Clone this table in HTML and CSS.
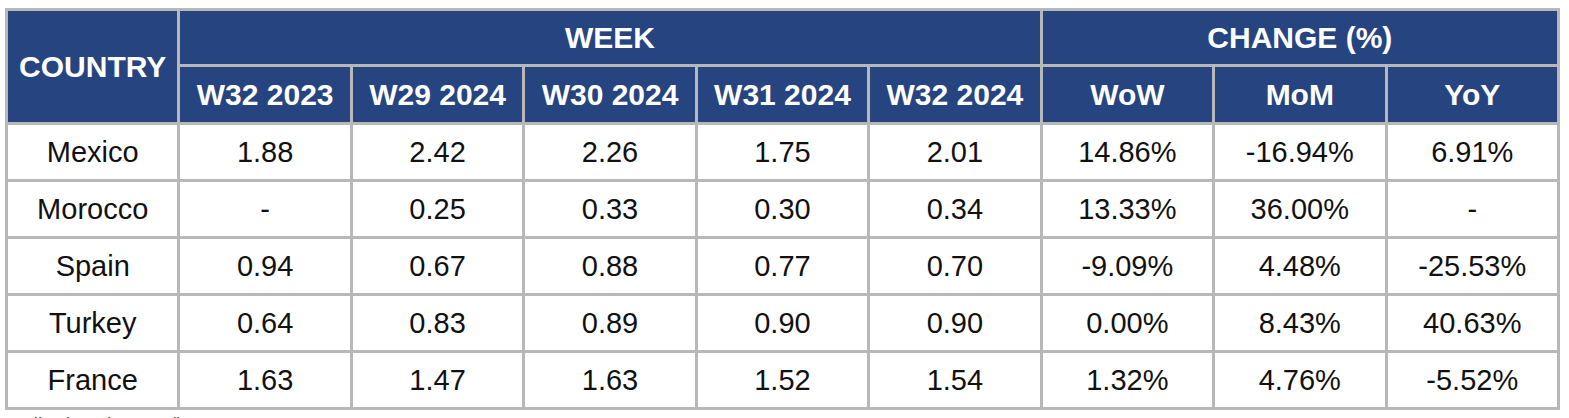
FILE: index.html
```html
<!DOCTYPE html>
<html lang="en">
<head>
<meta charset="utf-8">
<title>Weekly prices</title>
<link rel="stylesheet" href="styles.css">
</head>
<body>
<div class="page">
  <table class="prices">
    <thead>
      <tr class="group-row">
        <th rowspan="2" class="country-head">COUNTRY</th>
        <th colspan="5">WEEK</th>
        <th colspan="3">CHANGE (%)</th>
      </tr>
      <tr class="sub-row">
        <th>W32 2023</th>
        <th>W29 2024</th>
        <th>W30 2024</th>
        <th>W31 2024</th>
        <th>W32 2024</th>
        <th>WoW</th>
        <th>MoM</th>
        <th>YoY</th>
      </tr>
    </thead>
    <tbody>
      <tr><td>Mexico</td><td>1.88</td><td>2.42</td><td>2.26</td><td>1.75</td><td>2.01</td><td>14.86%</td><td>-16.94%</td><td>6.91%</td></tr>
      <tr><td>Morocco</td><td>-</td><td>0.25</td><td>0.33</td><td>0.30</td><td>0.34</td><td>13.33%</td><td>36.00%</td><td>-</td></tr>
      <tr><td>Spain</td><td>0.94</td><td>0.67</td><td>0.88</td><td>0.77</td><td>0.70</td><td>-9.09%</td><td>4.48%</td><td>-25.53%</td></tr>
      <tr><td>Turkey</td><td>0.64</td><td>0.83</td><td>0.89</td><td>0.90</td><td>0.90</td><td>0.00%</td><td>8.43%</td><td>40.63%</td></tr>
      <tr><td>France</td><td>1.63</td><td>1.47</td><td>1.63</td><td>1.52</td><td>1.54</td><td>1.32%</td><td>4.76%</td><td>-5.52%</td></tr>
    </tbody>
  </table>
  <p class="note">* All prices in USD/kg</p>
</div>
</body>
</html>
```

FILE: styles.css
```css
html, body {
  margin: 0;
  padding: 0;
  background: #ffffff;
}

.page {
  padding: 8px 0 0 5px;
  font-family: "Liberation Sans", Arial, sans-serif;
}

.prices {
  width: 1555px;
  table-layout: fixed;
  border-collapse: separate;
  border-spacing: 0;
  border-top: 3px solid #b8b8b8;
  border-left: 3px solid #b8b8b8;
}

.prices th,
.prices td {
  padding: 0;
  text-align: center;
  vertical-align: middle;
  border-right: 3px solid #b8b8b8;
  border-bottom: 3px solid #b8b8b8;
  white-space: nowrap;
}

.prices th {
  background: #264480;
  color: #ffffff;
  font-weight: bold;
  font-size: 30px;
}

.group-row th {
  height: 53px;
}

.sub-row th {
  height: 55px;
}

.prices td {
  height: 54px;
  color: #111111;
  font-size: 29px;
}

.note {
  margin: 3px 0 0 3px;
  font-size: 20px;
  line-height: 24px;
  color: #555555;
}
```
